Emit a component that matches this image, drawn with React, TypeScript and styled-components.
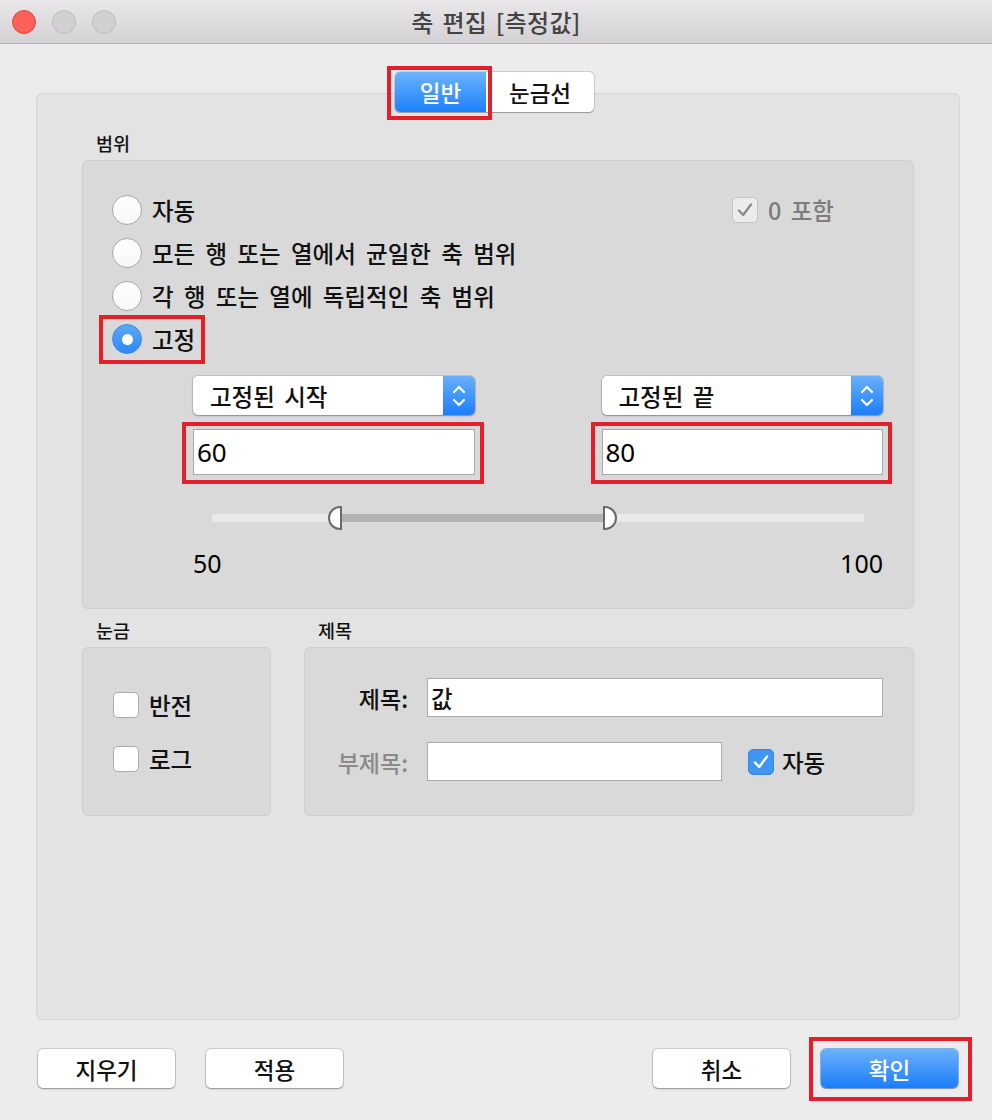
import React from 'react';
import styled, { createGlobalStyle, css } from 'styled-components';

const FONT = `"Noto Sans CJK KR", "Noto Sans", sans-serif`;
const RED = '#e41e2a';

const GlobalStyle = createGlobalStyle`
  html, body { margin: 0; padding: 0; background: #ececec; }
  body { font-family: ${FONT}; color: #111; font-weight: 500; }
  * { box-sizing: border-box; }
`;

/* red annotation frame drawn over a control */
const highlight = (t: number, r: number, b: number, l: number) => css`
  position: relative;
  &::after {
    content: '';
    position: absolute;
    top: -${t}px;
    right: -${r}px;
    bottom: -${b}px;
    left: -${l}px;
    border: 4px solid ${RED};
    pointer-events: none;
  }
`;

const Window = styled.div`
  width: 992px;
  height: 1120px;
  display: flex;
  flex-direction: column;
  background: #ececec;
  overflow: hidden;
`;

const TitleBar = styled.div`
  height: 44px;
  flex-shrink: 0;
  display: grid;
  grid-template-columns: 1fr auto 1fr;
  align-items: center;
  background: linear-gradient(#e9e7e9, #d3d1d3);
  border-bottom: 1px solid #b4b2b4;
`;

const Lights = styled.div`
  display: flex;
  gap: 16px;
  padding-left: 12px;
`;

const Light = styled.span<{ $red?: boolean }>`
  width: 24px;
  height: 24px;
  border-radius: 50%;
  background: ${(p) => (p.$red ? '#fc605b' : '#d1d0d1')};
  border: 1px solid ${(p) => (p.$red ? '#de4640' : '#bdbbbd')};
`;

const Title = styled.div`
  font-size: 24px;
  color: #444;
  letter-spacing: 0.3px;
  word-spacing: 3px;
`;

const Body = styled.div`
  flex: 1;
  display: flex;
  flex-direction: column;
  padding: 0 32px 0 36px;
`;

const TabRow = styled.div`
  margin-top: 28px;
  display: flex;
  justify-content: center;
  padding-right: 7px;
  position: relative;
  z-index: 1;
`;

const Segmented = styled.div`
  display: flex;
  height: 40px;
  border-radius: 5px;
  box-shadow: 0 0 0 1px rgba(0, 0, 0, 0.13), 0 1px 1px rgba(0, 0, 0, 0.22);
  background: #fff;
`;

const Segment = styled.div<{ $active?: boolean; $w: number }>`
  width: ${(p) => p.$w}px;
  display: flex;
  align-items: center;
  justify-content: center;
  font-size: 22.5px;
  ${(p) =>
    p.$active
      ? css`
          background: linear-gradient(#6db3fb, #1b80fb);
          color: #fff;
          border-radius: 5px 0 0 5px;
          ${highlight(6, 6, 8, 8)}
        `
      : css`
          color: #111;
          border-radius: 0 5px 5px 0;
        `}
`;

const Panel = styled.div`
  margin-top: -19px;
  height: 927px;
  background: #e3e3e3;
  border: 1px solid #d6d6d6;
  border-radius: 6px;
  padding: 38px 45px 0;
  display: flex;
  flex-direction: column;
`;

const SectionLabel = styled.div`
  font-size: 18.5px;
  line-height: 22px;
  padding-left: 14px;
  margin-bottom: 6px;
  color: #111;
`;

const GroupBox = styled.div`
  background: #d9d9d9;
  border: 1px solid #cfcfcf;
  border-radius: 6px;
`;

const RangeBox = styled(GroupBox)`
  padding: 34px 30px 30px 29px;
`;

const OptionList = styled.div`
  display: flex;
  flex-direction: column;
  gap: 13px;
`;

const FirstRow = styled.div`
  display: flex;
  justify-content: space-between;
  align-items: center;
  padding-right: 49px;
`;

const OptionRow = styled.div<{ $highlight?: boolean }>`
  display: inline-flex;
  align-self: flex-start;
  align-items: center;
  gap: 10px;
  height: 30px;
  font-size: 23.5px;
  word-spacing: 5px;
  ${(p) => p.$highlight && highlight(9, 10, 10, 13)}
`;

const RadioCircle = styled.span<{ $on?: boolean }>`
  width: 30px;
  height: 30px;
  border-radius: 50%;
  flex-shrink: 0;
  display: flex;
  align-items: center;
  justify-content: center;
  ${(p) =>
    p.$on
      ? css`
          background: linear-gradient(#5aa8f7, #2e8af5);
          border: 1px solid #3b88e6;
        `
      : css`
          background: linear-gradient(#fff, #f7f7f7);
          border: 1px solid #a9a9a9;
        `}
`;

const RadioDot = styled.span`
  width: 11px;
  height: 11px;
  border-radius: 50%;
  background: #fff;
`;

const CheckBox = styled.span<{ $variant?: 'off' | 'on' | 'disabled' }>`
  width: 26px;
  height: 26px;
  border-radius: 5px;
  flex-shrink: 0;
  display: flex;
  align-items: center;
  justify-content: center;
  ${(p) =>
    p.$variant === 'on'
      ? css`
          background: #3f95f3;
          border: 1px solid #3a86df;
        `
      : p.$variant === 'disabled'
      ? css`
          background: #ececec;
          border: 1px solid #c4c4c4;
        `
      : css`
          background: #fff;
          border: 1px solid #acacac;
        `}
`;

const CheckLabel = styled.div<{ $muted?: boolean }>`
  display: flex;
  align-items: center;
  gap: 10px;
  height: 26px;
  font-size: 23.5px;
  word-spacing: 4px;
  color: ${(p) => (p.$muted ? '#7c7c7c' : '#111')};
`;

const FixedControls = styled.div`
  margin: 22px 0 0 81px;
  width: 690px;
  display: grid;
  grid-template-columns: 1fr 1fr;
  column-gap: 127px;
  row-gap: 14px;
`;

const Dropdown = styled.div`
  height: 39px;
  display: flex;
  background: #fff;
  border-radius: 5px;
  box-shadow: 0 0 0 1px rgba(0, 0, 0, 0.1), 0 1px 2px rgba(0, 0, 0, 0.3);
  overflow: hidden;
`;

const DropdownText = styled.div`
  flex: 1;
  display: flex;
  align-items: center;
  padding-left: 17px;
  font-size: 23.5px;
  word-spacing: 4px;
`;

const Stepper = styled.div`
  width: 32px;
  background: linear-gradient(#6aaffb, #1a7ffa);
  display: flex;
  align-items: center;
  justify-content: center;
`;

const NumberField = styled.div`
  height: 46px;
  background: #fff;
  border: 1px solid #a8a8a8;
  display: flex;
  align-items: center;
  padding-left: 3px;
  font-family: "Noto Sans", ${FONT};
  font-weight: 400;
  font-size: 26px;
  color: #000;
  ${highlight(8, 10, 10, 12)}
`;

const SliderTrack = styled.div`
  position: relative;
  margin: 39px 19px 0 100px;
  width: 652px;
  height: 8px;
  background: #e9e9e9;
`;

const SliderFill = styled.div`
  position: absolute;
  top: 0;
  bottom: 0;
  background: #b3b3b3;
`;

const Thumb = styled.div<{ $side: 'left' | 'right' }>`
  position: absolute;
  top: -8px;
  width: 14px;
  height: 24px;
  background: #fff;
  border: 2px solid #6a6a6a;
  ${(p) =>
    p.$side === 'left'
      ? css`
          border-radius: 12px 0 0 12px;
          transform: translateX(-14px);
        `
      : css`
          border-radius: 0 12px 12px 0;
        `}
`;

const ScaleLabels = styled.div`
  margin: 26px 0 0 81px;
  width: 690px;
  display: flex;
  justify-content: space-between;
  font-family: "Noto Sans", ${FONT};
  font-weight: 400;
  font-size: 25px;
  line-height: 30px;
  color: #000;
`;

const LowerGrid = styled.div`
  margin-top: 10px;
  display: grid;
  grid-template-columns: 189px 1fr;
  column-gap: 33px;
`;

const Column = styled.div`
  display: flex;
  flex-direction: column;
`;

const TickBox = styled(GroupBox)`
  height: 169px;
  padding: 44px 0 0 30px;
  display: flex;
  flex-direction: column;
  gap: 28px;
`;

const TitleBox = styled(GroupBox)`
  height: 169px;
  padding: 30px 30px 0 19px;
  display: flex;
  flex-direction: column;
  gap: 25px;
`;

const FieldRow = styled.div`
  display: flex;
  align-items: center;
  gap: 19px;
`;

const FieldLabel = styled.div<{ $muted?: boolean }>`
  width: 84px;
  text-align: right;
  font-size: 23px;
  white-space: nowrap;
  color: ${(p) => (p.$muted ? '#8a8a8a' : '#111')};
`;

const TextField = styled.div<{ $w?: number }>`
  height: 39px;
  ${(p) => (p.$w ? `width: ${p.$w}px;` : 'flex: 1;')}
  background: #fff;
  border: 1px solid #ababab;
  display: flex;
  align-items: center;
  padding-left: 3px;
  font-size: 23.5px;
`;

const AutoCheck = styled(CheckLabel)`
  margin-left: 7px;
  gap: 8px;
`;

const Footer = styled.div`
  margin-top: 29px;
  padding: 0 2px;
  display: flex;
  justify-content: space-between;
`;

const ButtonGroup = styled.div`
  display: flex;
  gap: 31px;
`;

const Button = styled.div<{ $primary?: boolean }>`
  width: 137px;
  height: 39px;
  border-radius: 5px;
  display: flex;
  align-items: center;
  justify-content: center;
  font-size: 22.5px;
  ${(p) =>
    p.$primary
      ? css`
          background: linear-gradient(#6cb1fb, #1a7ef9);
          color: #fff;
          box-shadow: 0 0 0 1px rgba(20, 100, 220, 0.45), 0 1px 1px rgba(0, 0, 0, 0.2);
          ${highlight(12, 14, 13, 12)}
        `
      : css`
          background: #fff;
          color: #111;
          box-shadow: 0 0 0 1px rgba(0, 0, 0, 0.12), 0 1px 2px rgba(0, 0, 0, 0.3);
        `}
`;

const Check = ({ color }: { color: string }) => (
  <svg width="20" height="20" viewBox="0 0 20 20">
    <path d="M4 10.5 L8.2 15 L16 4.5" fill="none" stroke={color} strokeWidth="2.4" strokeLinecap="round" strokeLinejoin="round" />
  </svg>
);

const Chevrons = () => (
  <svg width="16" height="26" viewBox="0 0 16 26">
    <path d="M3 9 L8 4 L13 9 M3 17 L8 22 L13 17" fill="none" stroke="#fff" strokeWidth="2.2" strokeLinecap="round" strokeLinejoin="round" />
  </svg>
);

const Radio = ({ on, label, highlight: hl }: { on?: boolean; label: string; highlight?: boolean }) => (
  <OptionRow $highlight={hl}>
    <RadioCircle $on={on}>{on && <RadioDot />}</RadioCircle>
    {label}
  </OptionRow>
);

const MIN = 50;
const MAX = 100;
const START = 60;
const END = 80;
const TRACK = 652;

export default function App() {
  const pos = (v: number) => ((v - MIN) / (MAX - MIN)) * TRACK;
  const left = pos(START);
  const right = pos(END);
  return (
    <Window>
      <GlobalStyle />
      <TitleBar>
        <Lights>
          <Light $red />
          <Light />
          <Light />
        </Lights>
        <Title>축 편집 [측정값]</Title>
        <div />
      </TitleBar>
      <Body>
        <TabRow>
          <Segmented>
            <Segment $active $w={91}>일반</Segment>
            <Segment $w={108}>눈금선</Segment>
          </Segmented>
        </TabRow>
        <Panel>
          <SectionLabel>범위</SectionLabel>
          <RangeBox>
            <OptionList>
              <FirstRow>
                <Radio label="자동" />
                <CheckLabel $muted>
                  <CheckBox $variant="disabled">
                    <Check color="#8c8c8c" />
                  </CheckBox>
                  0 포함
                </CheckLabel>
              </FirstRow>
              <Radio label="모든 행 또는 열에서 균일한 축 범위" />
              <Radio label="각 행 또는 열에 독립적인 축 범위" />
              <Radio on highlight label="고정" />
            </OptionList>
            <FixedControls>
              <Dropdown>
                <DropdownText>고정된 시작</DropdownText>
                <Stepper>
                  <Chevrons />
                </Stepper>
              </Dropdown>
              <Dropdown>
                <DropdownText>고정된 끝</DropdownText>
                <Stepper>
                  <Chevrons />
                </Stepper>
              </Dropdown>
              <NumberField>{START}</NumberField>
              <NumberField>{END}</NumberField>
            </FixedControls>
            <SliderTrack>
              <SliderFill style={{ left, width: right - left }} />
              <Thumb $side="left" style={{ left }} />
              <Thumb $side="right" style={{ left: right }} />
            </SliderTrack>
            <ScaleLabels>
              <span>{MIN}</span>
              <span>{MAX}</span>
            </ScaleLabels>
          </RangeBox>
          <LowerGrid>
            <Column>
              <SectionLabel>눈금</SectionLabel>
              <TickBox>
                <CheckLabel>
                  <CheckBox />
                  반전
                </CheckLabel>
                <CheckLabel>
                  <CheckBox />
                  로그
                </CheckLabel>
              </TickBox>
            </Column>
            <Column>
              <SectionLabel>제목</SectionLabel>
              <TitleBox>
                <FieldRow>
                  <FieldLabel>제목:</FieldLabel>
                  <TextField>값</TextField>
                </FieldRow>
                <FieldRow>
                  <FieldLabel $muted>부제목:</FieldLabel>
                  <TextField $w={295} />
                  <AutoCheck>
                    <CheckBox $variant="on">
                      <Check color="#fff" />
                    </CheckBox>
                    자동
                  </AutoCheck>
                </FieldRow>
              </TitleBox>
            </Column>
          </LowerGrid>
        </Panel>
        <Footer>
          <ButtonGroup>
            <Button>지우기</Button>
            <Button>적용</Button>
          </ButtonGroup>
          <ButtonGroup>
            <Button>취소</Button>
            <Button $primary>확인</Button>
          </ButtonGroup>
        </Footer>
      </Body>
    </Window>
  );
}
